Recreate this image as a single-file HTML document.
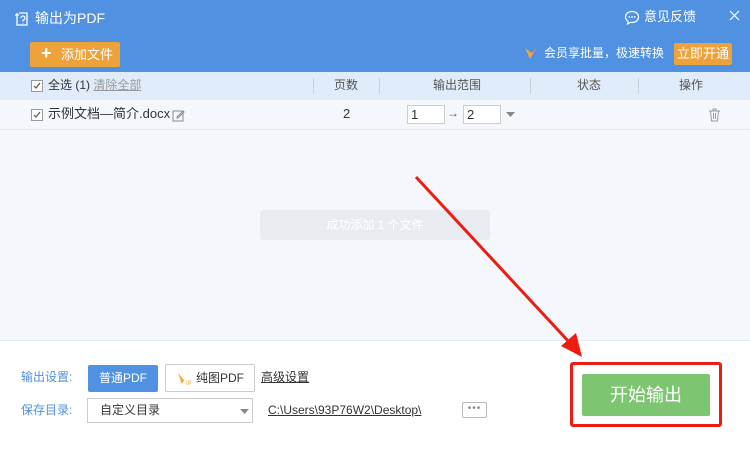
<!DOCTYPE html>
<html><head><meta charset="utf-8"><style>
*{margin:0;padding:0;box-sizing:border-box}
body{width:750px;height:450px;overflow:hidden;position:relative;font-family:"Liberation Sans","Noto Sans CJK SC",sans-serif;font-size:12px;line-height:1.15;color:#333;background:#fff}
.a{position:absolute}
.cb{position:absolute;width:12px;height:12px;border:1px solid #999;background:#fff}
</style></head><body>
<div class="a" style="left:0;top:0;width:750px;height:72px;background:#5091e1"></div>
<svg class="a" style="left:14px;top:11px" width="16" height="16" viewBox="0 0 16 16"><path d="M5 2h8v12H3V6" fill="none" stroke="#fff" stroke-width="1.3"/><path d="M1 4h4M3 2v4" stroke="#fff" stroke-width="1.3"/><path d="M7 7a2 2 0 1 1 2 2v1.5M9 12v.5" fill="none" stroke="#fff" stroke-width="1.2"/></svg>
<div class="a" style="left:35px;top:10px;color:#fff;font-size:14px">输出为PDF</div>
<svg class="a" style="left:624px;top:10px" width="16" height="15" viewBox="0 0 16 15"><path d="M8 1.5C4 1.5 1.5 4 1.5 7c0 1.8 1 3.3 2.5 4.3L3.5 14l3-1.7c.5.1 1 .2 1.5.2 4 0 6.5-2.5 6.5-5.5S12 1.5 8 1.5z" fill="none" stroke="#fff" stroke-width="1.2"/><circle cx="5.3" cy="7" r=".9" fill="#fff"/><circle cx="8" cy="7" r=".9" fill="#fff"/><circle cx="10.7" cy="7" r=".9" fill="#fff"/></svg>
<div class="a" style="left:644px;top:10px;color:#fff;font-size:13px">意见反馈</div>
<svg class="a" style="left:729px;top:10px" width="11" height="11"><path d="M1 1l9 9M10 1l-9 9" stroke="#fff" stroke-width="1.2"/></svg>
<div class="a" style="left:30px;top:42px;width:90px;height:25px;background:#eda23a;border-radius:2px;color:#fff;font-size:13px;line-height:25px"><span style="position:absolute;left:11px;top:-1px;font-size:18px;font-weight:bold">+</span><span style="position:absolute;left:31px">添加文件</span></div>
<svg class="a" style="left:524px;top:46px" width="14" height="14"><path d="M1 2l5 11 7-12-5 6z" fill="#f0a53c"/></svg>
<div class="a" style="left:544px;top:47px;color:#fff;font-size:12px">会员享批量，极速转换</div>
<div class="a" style="left:674px;top:43px;width:58px;height:22px;background:#eda23a;border-radius:2px;color:#fff;font-size:13px;line-height:22px;text-align:center">立即开通</div>
<div class="a" style="left:0;top:72px;width:750px;height:28px;background:#e0ecfa"></div>
<div class="a" style="left:0;top:100px;width:750px;height:240px;background:#f4f7fc"></div>
<div class="a" style="left:0;top:129px;width:750px;height:1px;background:#e4e8ef"></div>
<div class="a" style="left:0;top:340px;width:750px;height:1px;background:#e4e8ef"></div>
<div class="cb" style="left:31px;top:80px"><svg width="10" height="10" style="position:absolute;left:0;top:0"><path d="M2 5l2 2 4-5" fill="none" stroke="#555" stroke-width="1.2"/></svg></div>
<div class="a" style="left:48px;top:79px">全选 (1) <span style="color:#999;text-decoration:underline">清除全部</span></div>
<div class="a" style="left:313px;top:78px;width:1px;height:16px;background:#c8d0db"></div>
<div class="a" style="left:379px;top:78px;width:1px;height:16px;background:#c8d0db"></div>
<div class="a" style="left:530px;top:78px;width:1px;height:16px;background:#c8d0db"></div>
<div class="a" style="left:638px;top:78px;width:1px;height:16px;background:#c8d0db"></div>
<div class="a" style="left:334px;top:79px;color:#555">页数</div>
<div class="a" style="left:433px;top:79px;color:#555">输出范围</div>
<div class="a" style="left:577px;top:79px;color:#555">状态</div>
<div class="a" style="left:679px;top:79px;color:#555">操作</div>
<div class="cb" style="left:31px;top:109px"><svg width="10" height="10" style="position:absolute;left:0;top:0"><path d="M2 5l2 2 4-5" fill="none" stroke="#555" stroke-width="1.2"/></svg></div>
<div class="a" style="left:48px;top:107px;font-size:13px">示例文档—简介.docx</div>
<svg class="a" style="left:172px;top:109px" width="13" height="13"><rect x="1" y="2" width="10" height="10" fill="none" stroke="#888"/><path d="M5 8l6-6 1 1-6 6H5z" fill="#fff" stroke="#888"/></svg>
<div class="a" style="left:343px;top:107px;font-size:13px">2</div>
<div class="a" style="left:407px;top:105px;width:38px;height:19px;border:1px solid #ccc;background:#fff;font-size:13px;padding-left:3px;line-height:17px">1</div>
<div class="a" style="left:447px;top:107px;color:#555">→</div>
<div class="a" style="left:463px;top:105px;width:38px;height:19px;border:1px solid #ccc;background:#fff;font-size:13px;padding-left:3px;line-height:17px">2</div>
<svg class="a" style="left:506px;top:112px" width="9" height="5"><path d="M0 0h9L4.5 5z" fill="#888"/></svg>
<svg class="a" style="left:708px;top:108px" width="13" height="14"><path d="M1 3h11M5 3V1h3v2M2.5 3l1 10h6l1-10M5.5 5v6M7.5 5v6" fill="none" stroke="#999"/></svg>
<div class="a" style="left:260px;top:210px;width:230px;height:30px;background:#e8ecf1;border-radius:3px;color:#fff;text-align:center;line-height:30px">成功添加 1 个文件</div>
<div class="a" style="left:21px;top:371px;color:#4f8fe0">输出设置:</div>
<div class="a" style="left:88px;top:365px;width:70px;height:27px;background:#5091e1;border-radius:2px;color:#fff;text-align:center;line-height:27px">普通PDF</div>
<div class="a" style="left:165px;top:364px;width:90px;height:28px;border:1px solid #ccc;border-radius:2px;background:#fff;line-height:26px"><svg style="position:absolute;left:11px;top:7px" width="14" height="13"><path d="M1 1l4 11 6-11-4 7z" fill="#f0a53c"/><text x="9" y="13" font-size="6" fill="#f0a53c">IP</text></svg><span style="position:absolute;left:30px">纯图PDF</span></div>
<div class="a" style="left:261px;top:371px;text-decoration:underline">高级设置</div>
<div class="a" style="left:21px;top:404px;color:#4f8fe0">保存目录:</div>
<div class="a" style="left:87px;top:398px;width:166px;height:25px;border:1px solid #ccc;background:#fff;padding-left:12px;line-height:23px">自定义目录</div>
<svg class="a" style="left:240px;top:409px" width="9" height="5"><path d="M0 0h9L4.5 5z" fill="#888"/></svg>
<div class="a" style="left:268px;top:404px;text-decoration:underline">C:\Users\93P76W2\Desktop\</div>
<div class="a" style="left:462px;top:402px;width:25px;height:16px;border:1px solid #bbb;border-radius:2px;text-align:center;line-height:11px;color:#888;font-size:10px;letter-spacing:1px">•••</div>
<div class="a" style="left:582px;top:374px;width:128px;height:42px;background:#7dc571;border-radius:2px;color:#fff;font-size:18px;text-align:center;line-height:42px">开始输出</div>
<div class="a" style="left:570px;top:362px;width:152px;height:65px;border:3px solid #ee1c10;border-radius:3px"></div>
<svg class="a" style="left:0;top:0" width="750" height="450"><line x1="416" y1="177" x2="570" y2="343" stroke="#ee1c10" stroke-width="3"/><path d="M582 357L561 346L576 333Z" fill="#ee1c10"/></svg>
</body></html>
